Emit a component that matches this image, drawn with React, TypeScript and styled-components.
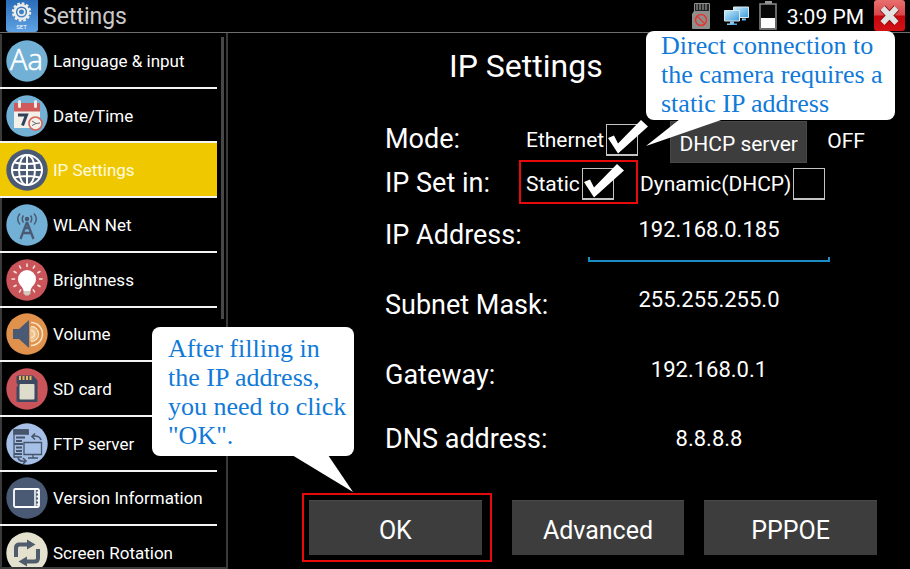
import React, { useState } from "react";
import styled, { createGlobalStyle } from "styled-components";

const GlobalStyle = createGlobalStyle`
  *, *::before, *::after { box-sizing: border-box; }
  body {
    margin: 0;
    background: #000;
    color: #fff;
    font-family: Roboto, "Liberation Sans", sans-serif;
  }
  button, input { font: inherit; color: inherit; }
  h1, h2, p, ul { margin: 0; padding: 0; }
  svg { display: block; }
`;

const line = "#3a3a3a";
const alert = "#e8090b";

const Page = styled.div`
  position: relative;
  display: flex;
  flex-direction: column;
  height: 100vh;
  overflow: hidden;
`;

const Header = styled.header`
  display: flex;
  align-items: center;
  height: 33px;
  padding: 0 5px 1px 6px;
  border-bottom: 1px solid #6e6e6e;
`;

const AppTitle = styled.h1`
  margin-left: 5px;
  padding-top: 2px;
  font-size: 23px;
  font-weight: 400;
  line-height: 30px;
  color: #c9c9c9;
`;

const Status = styled.div`
  display: flex;
  align-items: center;
  gap: 10px;
  margin-left: auto;
`;

const Clock = styled.time`
  padding-top: 2px;
  font-size: 21px;
  line-height: 30px;
`;

const CloseButton = styled.button`
  width: 31px;
  height: 31px;
  padding: 0;
  border: 0;
  border-radius: 3px;
  background: linear-gradient(#e8706f 0%, #d8474a 48%, #c4060c 52%, #d31217 100%);
`;

const Body = styled.div`
  display: flex;
  flex: 1;
  min-height: 0;
`;

const Sidebar = styled.nav`
  display: flex;
  width: 228px;
  flex: none;
  padding-top: 1px;
  border-right: 2px solid ${line};
  border-bottom: 2px solid ${line};
  overflow: hidden;
`;

const Menu = styled.ul`
  display: grid;
  grid-auto-rows: 1fr;
  width: 217px;
  height: calc(100% + 14px);
  list-style: none;
`;

const MenuRow = styled.li`
  display: flex;
  border-bottom: 2px solid #f4f4f4;
`;

const MenuButton = styled.button<{ $active: boolean }>`
  display: flex;
  flex: 1;
  align-items: center;
  gap: 5px;
  padding: 1px 0 0 4px;
  border: 0;
  border-left: 2px solid ${(p) => (p.$active ? "#efc800" : line)};
  background: ${(p) => (p.$active ? "#efc800" : "#000")};
  color: ${(p) => (p.$active ? "#fffbe0" : "#fff")};
  font-size: 17px;
  text-align: left;
  white-space: nowrap;
`;

const ScrollThumb = styled.div`
  width: 3px;
  height: 53%;
  margin: 3px 0 0 4px;
  background: #484848;
`;

const Main = styled.main`
  display: flex;
  flex: 1;
  flex-direction: column;
  min-width: 0;
`;

const Title = styled.h2`
  margin-left: 221px;
  padding-top: 8px;
  height: 83px;
  font-size: 32px;
  font-weight: 400;
  line-height: 50px;
`;

const Form = styled.form`
  display: flex;
  flex: 1;
  flex-direction: column;
`;

const Row = styled.div<{ $height: number }>`
  display: flex;
  align-items: center;
  height: ${(p) => p.$height}px;
  padding-left: 157px;
`;

const RowLabel = styled.span<{ $width: number }>`
  flex: none;
  width: ${(p) => p.$width}px;
  padding-top: 1px;
  font-size: 27px;
  line-height: 32px;
  white-space: nowrap;
`;

const CheckLabel = styled.label`
  display: flex;
  align-items: center;
  gap: 2px;
  padding-top: 4px;
  font-size: 21px;
  line-height: 32px;
  white-space: nowrap;
`;

const Highlight = styled.div`
  display: flex;
  height: 44px;
  width: 119px;
  padding: 0 5px;
  margin-right: 2px;
  border: 2px solid ${alert};
`;

const CheckBox = styled.span`
  position: relative;
  width: 32px;
  height: 32px;

  input {
    appearance: none;
    display: block;
    width: 32px;
    height: 32px;
    margin: 0;
    border: 1px solid #c4c4c4;
    border-bottom-width: 2px;
    background: transparent;
  }
  svg {
    position: absolute;
    left: 0;
    top: 0;
    overflow: visible;
    visibility: hidden;
    pointer-events: none;
  }
  input:checked + svg { visibility: visible; }
`;

const ServerButton = styled.button`
  height: 42px;
  width: 137px;
  margin: 8px 20px 0 32px;
  padding: 4px 0 0;
  border: 1px solid #484848;
  background: #3d3d3d;
  font-size: 21px;
  white-space: nowrap;
`;

const ServerState = styled.output`
  padding-top: 6px;
  font-size: 21px;
`;

const AddressInput = styled.input`
  width: 242px;
  height: 30px;
  padding: 0;
  border: 0;
  outline: 0;
  background: transparent;
  font-size: 22px;
  text-align: center;
`;

const InputFrame = styled.span<{ $focused: boolean }>`
  display: flex;
  flex-direction: column;
  margin-bottom: 10px;

  ${Row}:nth-last-of-type(2) & { margin-bottom: 0; }

  &::after {
    content: "";
    visibility: ${(p) => (p.$focused ? "visible" : "hidden")};
    height: 5px;
    margin: 13px 0 -18px;
    border: solid #1b8cc4;
    border-width: 0 2px 2px;
  }
`;

const Actions = styled.div`
  display: grid;
  grid-template-columns: 190fr 173fr 173fr;
  align-items: center;
  gap: 20px;
  margin-top: auto;
  padding: 0 33px 7px 74px;
`;

const ActionHighlight = styled.div`
  display: flex;
  padding: 5px 8px 5px 5px;
  border: 2px solid ${alert};
`;

const ActionButton = styled.button`
  flex: 1;
  height: 55px;
  padding: 4px 0 0;
  border: 0;
  border-top: 1px solid #4a4a4a;
  background: #3d3d3d;
  font-size: 25px;
`;

const Callout = styled.aside`
  position: absolute;
  border-radius: 8px;
  background: #fff;
  color: #117ad8;
  font-family: "Liberation Serif", serif;
  font-size: 26px;
  line-height: 29px;
  white-space: nowrap;

  svg {
    position: absolute;
    overflow: visible;
  }
`;

const StaticTip = styled(Callout)`
  top: 31px;
  right: 15px;
  width: 249px;
  height: 89px;
  padding: 0 15px;

  svg { left: 0; top: 88px; }
`;

const OkTip = styled(Callout)`
  top: 327px;
  left: 152px;
  width: 202px;
  height: 129px;
  padding: 7px 16px;

  svg { left: 140px; top: 128px; }
`;

const Disc = ({ fill, children }: { fill: string; children: React.ReactNode }) => (
  <svg width="42" height="42" viewBox="0 0 42 42" fill="none" aria-hidden="true">
    <circle cx="21" cy="21" r="20.7" fill={fill} />
    {children}
  </svg>
);

const slate = "#4a5a74";

const rays = Array.from({ length: 11 }, (_, i) => {
  const a = ((i * 30 - 240) * Math.PI) / 180;
  return (
    <line
      key={i}
      x1={21 + 12.5 * Math.cos(a)}
      y1={20 + 12.5 * Math.sin(a)}
      x2={21 + 15 * Math.cos(a)}
      y2={20 + 15 * Math.sin(a)}
    />
  );
});

const icons = {
  language: (
    <Disc fill="#72b0d6">
      <text x="20.5" y="30" textAnchor="middle" fill="#fff" fontFamily="Open Sans, sans-serif" fontWeight="300" fontSize="29" stroke="#fff" strokeWidth=".6">Aa</text>
    </Disc>
  ),
  date: (
    <Disc fill="#72b0d6">
      <path d="M8 16h26v17H8z" fill="#f3f0ea" />
      <path d="M8 8h26v8.500H8z" fill="#cf5a5a" />
      <path d="M13.500 6.500v5M29.500 6.500v5" stroke="#f1e9e6" strokeWidth="3" strokeLinecap="round" />
      <path d="M12 20h8.500l-4 10.500" stroke="#33405c" strokeWidth="3" />
      <circle cx="29.500" cy="28.500" r="6.500" fill="#f3f0ea" stroke="#d96257" strokeWidth="1.600" />
      <path d="M26 26l4 2.500 4-.5M30 28.500l-4 2" stroke="#6d6670" />
    </Disc>
  ),
  ip: (
    <Disc fill={slate}>
      <g stroke="#fff" strokeWidth="2">
        <circle cx="21" cy="21" r="15" />
        <ellipse cx="21" cy="21" rx="8" ry="15" />
        <path d="M21 6v30M6 21h30M8.500 13.500q12.500 3 25 0M8.500 28.500q12.500-3 25 0" />
      </g>
    </Disc>
  ),
  wlan: (
    <Disc fill="#72b0d6">
      <g stroke={slate} strokeWidth="1.500">
        <circle cx="21" cy="15" r="1.500" fill={slate} />
        <path d="M21 18l-6.500 17M21 18l6.500 17M18.500 24h5M17 29h8" strokeWidth="2.300" />
        <path d="M17.500 11.500q-2.500 3.500 0 7M24.500 11.500q2.500 3.500 0 7M14 9.500q-4.500 5.500 0 11M28 9.500q4.500 5.500 0 11" />
      </g>
    </Disc>
  ),
  brightness: (
    <Disc fill="#c9555a">
      <path d="M21 11a9 9 0 0 0-9 9c0 6 5 7 5.500 12h7c.5-5 5.500-6 5.500-12a9 9 0 0 0-9-9z" fill="#fff" />
      <path d="M17.500 32h7v2.500l-2 2h-3l-2-2z" fill="#cfcabd" />
      <g stroke="#f8e6de" strokeWidth="1.500" strokeLinecap="round">{rays}</g>
    </Disc>
  ),
  volume: (
    <Disc fill="#e0924c">
      <path d="M24 14a7 7 0 0 1 0 14" fill="#efc38d" />
      <path d="M7 16h6l10-9v28l-10-9H7z" fill={slate} />
      <path d="M25 17.500a3.500 3.500 0 0 1 0 7M25 13.500a7.500 7.500 0 0 1 0 15M25 9.500a11.500 11.500 0 0 1 0 23" stroke="#f8e3c5" strokeWidth="1.500" />
    </Disc>
  ),
  sd: (
    <Disc fill="#c9555a">
      <path d="M10.500 9q0-1.500 1.500-1.500h15l4.500 5v20q0 1.500-1.500 1.500H12q-1.500 0-1.500-1.500V19l1.500-2-1.500-2z" fill="#3d4961" />
      <path d="M14 8v4M17.500 8v4M21 8v4M24.500 8v4" stroke="#e9b75b" strokeWidth="2" />
      <rect x="13.500" y="16" width="15" height="15.500" rx="1" fill="#dedccb" />
    </Disc>
  ),
  ftp: (
    <Disc fill="#a6bfe6">
      <g stroke="#46546c" strokeWidth="1.300">
        <path d="M16 34H8V7h14v5" />
        <path d="M8 7h14v4H8z" fill="#46546c" />
        <path d="M10 14.500h9M10 18h6M8 21h9M10 24.500h6M10 28h6M8 31h8" strokeWidth="1.800" />
        <path d="M18 19.500h17.500v12H18zM27 31.500v3M22 35h10" fill="#a6bfe6" />
        <path d="M35 17q-1-4.500-8-4M29 10.500l-3 3 3 3M12 34.500q1 4.500 7 3.500M17 35l3 3-3 3" strokeWidth="1.600" />
      </g>
    </Disc>
  ),
  version: (
    <Disc fill={slate}>
      <rect x="8" y="12" width="25" height="18" rx="1.500" stroke="#fff" strokeWidth="1.800" />
      <path d="M29 12v18" stroke="#fff" strokeWidth="1.500" />
      <path d="M31.500 14.500v14" stroke="#fff" strokeWidth="2" strokeDasharray="2 2" />
    </Disc>
  ),
  rotation: (
    <Disc fill="#e4e2cf">
      <path d="M10 25V16q0-3.500 3.500-3.500h8M32 17v9q0 3.500-3.500 3.500H20" stroke="#505c6c" strokeWidth="4" />
      <path d="M21 7.500l8.500 5-8.500 5zM21 24.500l-8.500 5 8.500 5z" fill="#505c6c" />
    </Disc>
  ),
};

const menu: { label: string; icon: keyof typeof icons }[] = [
  { label: "Language & input", icon: "language" },
  { label: "Date/Time", icon: "date" },
  { label: "IP Settings", icon: "ip" },
  { label: "WLAN Net", icon: "wlan" },
  { label: "Brightness", icon: "brightness" },
  { label: "Volume", icon: "volume" },
  { label: "SD card", icon: "sd" },
  { label: "FTP server", icon: "ftp" },
  { label: "Version Information", icon: "version" },
  { label: "Screen Rotation", icon: "rotation" },
];

const addresses = [
  { id: "ip", label: "IP Address:", value: "192.168.0.185", height: 60 },
  { id: "mask", label: "Subnet Mask:", value: "255.255.255.0", height: 80 },
  { id: "gateway", label: "Gateway:", value: "192.168.0.1", height: 60 },
  { id: "dns", label: "DNS address:", value: "8.8.8.8", height: 68 },
];

const SettingsLogo = () => (
  <svg width="32" height="32" viewBox="0 0 32 32" aria-hidden="true">
    <defs>
      <linearGradient id="logo" x1="0" y1="0" x2="0" y2="1">
        <stop offset="0" stopColor="#2567b4" />
        <stop offset="1" stopColor="#5fa3e4" />
      </linearGradient>
    </defs>
    <rect x="0" y="-3" width="32" height="35" rx="3" fill="url(#logo)" />
    <g fill="none" stroke="#f0eee8">
      <circle cx="15.500" cy="12" r="8.700" strokeWidth="2" strokeDasharray="2.700 1.850" />
      <circle cx="15.500" cy="12" r="6.800" strokeWidth="2.400" />
      <circle cx="15.500" cy="12" r="3.300" strokeWidth="1.600" />
    </g>
    <text x="15.500" y="29" textAnchor="middle" fontSize="6" fill="#fff" fontFamily="Roboto, sans-serif">SET</text>
  </svg>
);

const CardStatus = () => (
  <svg width="23" height="28" viewBox="0 0 23 28" aria-label="No SD card">
    <path d="M4 1h14q1 0 1 1v24q0 1-1 1H2q-1 0-1-1V12l2-3V2q0-1 1-1z" fill="#8e8e8e" />
    <path d="M4 2h14v7H4z" fill="#222" />
    <path d="M6 2v6M9 2v6M12 2v6M15 2v6" stroke="#aaa" />
    <circle cx="10" cy="18" r="5.500" fill="none" stroke="#e13a30" strokeWidth="1.600" />
    <path d="M6 14l8 8" stroke="#e13a30" strokeWidth="1.600" />
  </svg>
);

const NetworkStatus = () => (
  <svg width="25" height="20" viewBox="0 0 25 20" aria-label="Network">
    <defs>
      <linearGradient id="screen" x1="0" y1="0" x2="1" y2="1">
        <stop offset="0" stopColor="#c9ecfb" />
        <stop offset="1" stopColor="#3b9bdc" />
      </linearGradient>
    </defs>
    <g fill="url(#screen)" stroke="#dbe9ee">
      <path d="M9.500 1h15v10.500h-15z" />
      <path d="M18 12.500h4v2h-4z" stroke="none" />
      <path d="M.5 4.500h15V15H.5z" />
      <path d="M6 15.500h4v2H6zM3 17.500h10v1.500H3z" stroke="none" />
    </g>
  </svg>
);

const BatteryStatus = () => (
  <svg width="18" height="29" viewBox="0 0 18 29" aria-label="Battery">
    <path d="M6 0h7v3H6z" fill="#999" />
    <rect x="1" y="3" width="16" height="25" fill="#080808" stroke="#8a8a8a" strokeWidth="1.500" />
    <rect x="2" y="17" width="14" height="10" fill="#fff" />
  </svg>
);

const Tick = () => (
  <svg width="32" height="32" viewBox="0 0 32 32" aria-hidden="true">
    <path d="M2 14l6-2.500L12 19.500 35-4l7 6.500L12 29.500z" fill="#fff" />
  </svg>
);

function Check({ label, initial }: { label: string; initial: boolean }) {
  const [on, setOn] = useState(initial);
  return (
    <CheckLabel>
      {label}
      <CheckBox>
        <input type="checkbox" checked={on} onChange={() => setOn(!on)} />
        <Tick />
      </CheckBox>
    </CheckLabel>
  );
}

export default function App() {
  const [active, setActive] = useState("ip");
  const [field, setField] = useState("ip");
  const [dhcp, setDhcp] = useState(false);

  return (
    <Page>
      <GlobalStyle />
      <Header>
        <SettingsLogo />
        <AppTitle>Settings</AppTitle>
        <Status>
          <CardStatus />
          <NetworkStatus />
          <BatteryStatus />
          <Clock>3:09 PM</Clock>
          <CloseButton type="button" aria-label="Close">
            <svg width="31" height="31" viewBox="0 0 31 31">
              <path d="M8.500 8l14 15M22.500 8l-14 15" stroke="#8d1013" strokeWidth="7.500" />
              <path d="M8.500 8l14 15M22.500 8l-14 15" stroke="#e2e2e2" strokeWidth="5.500" />
            </svg>
          </CloseButton>
        </Status>
      </Header>

      <Body>
        <Sidebar aria-label="Settings">
          <Menu>
            {menu.map((item) => (
              <MenuRow key={item.icon}>
                <MenuButton type="button" $active={item.icon === active} onClick={() => setActive(item.icon)}>
                  {icons[item.icon]}
                  {item.label}
                </MenuButton>
              </MenuRow>
            ))}
          </Menu>
          <ScrollThumb />
        </Sidebar>

        <Main>
          <Title>IP Settings</Title>
          <Form onSubmit={(e) => e.preventDefault()}>
            <Row $height={44}>
              <RowLabel $width={141}>Mode:</RowLabel>
              <Check label="Ethernet" initial />
              <ServerButton type="button" onClick={() => setDhcp(!dhcp)}>DHCP server</ServerButton>
              <ServerState>{dhcp ? "ON" : "OFF"}</ServerState>
            </Row>
            <Row $height={44}>
              <RowLabel $width={134}>IP Set in:</RowLabel>
              <Highlight>
                <Check label="Static" initial />
              </Highlight>
              <Check label="Dynamic(DHCP)" initial={false} />
            </Row>
            {addresses.map((a) => (
              <Row key={a.id} $height={a.height}>
                <RowLabel as="label" htmlFor={a.id} $width={203}>{a.label}</RowLabel>
                <InputFrame $focused={a.id === field}>
                  <AddressInput id={a.id} defaultValue={a.value} onFocus={() => setField(a.id)} />
                </InputFrame>
              </Row>
            ))}
            <Actions>
              <ActionHighlight>
                <ActionButton type="submit">OK</ActionButton>
              </ActionHighlight>
              <ActionButton type="button">Advanced</ActionButton>
              <ActionButton type="button">PPPOE</ActionButton>
            </Actions>
          </Form>
        </Main>
      </Body>

      <StaticTip>
        <p>Direct connection to</p>
        <p>the camera requires a</p>
        <p>static IP address</p>
        <svg width="80" height="28" viewBox="0 0 80 28" aria-hidden="true">
          <path d="M34 0h44L0 27z" fill="#fff" />
        </svg>
      </StaticTip>
      <OkTip>
        <p>After filling in</p>
        <p>the IP address,</p>
        <p>you need to click</p>
        <p>"OK".</p>
        <svg width="62" height="38" viewBox="0 0 62 38" aria-hidden="true">
          <path d="M0 0h36l25 37z" fill="#fff" />
        </svg>
      </OkTip>
    </Page>
  );
}
